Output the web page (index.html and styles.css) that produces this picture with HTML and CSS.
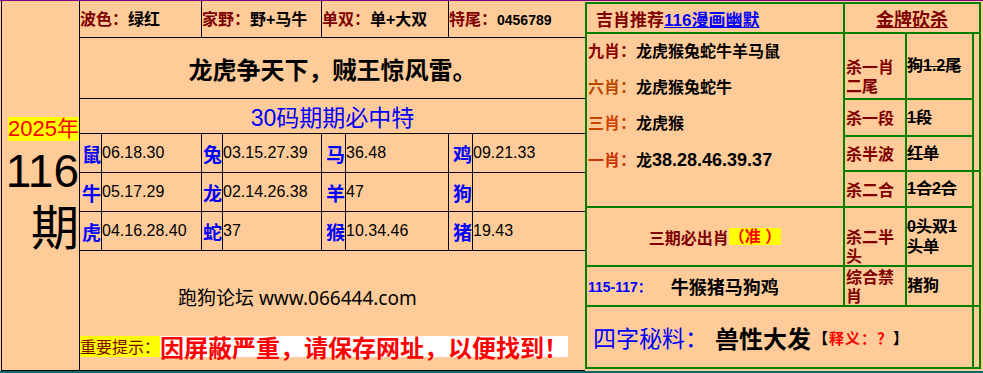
FILE: index.html
```html
<!DOCTYPE html>
<html lang="zh-CN">
<head>
<meta charset="utf-8">
<title>2025年116期</title>
<link rel="stylesheet" href="styles.css">
</head>
<body>
<div class="page">
  <div class="board">
    <div class="left">
      <div class="issue">
        <span class="year">2025年</span>
        <span class="num">116</span>
        <span class="qi">期</span>
      </div>
      <div class="info span2"><span class="k">波色：</span>绿红</div>
      <div class="info span2"><span class="k">家野：</span>野+马牛</div>
      <div class="info span2"><span class="k">单双：</span>单+大双</div>
      <div class="info span2"><span class="k">特尾：</span><span class="digits">0456789</span></div>
      <div class="poem">龙虎争天下，贼王惊风雷。</div>
      <div class="t30">30码期期必中特</div>

      <div class="z">鼠</div><div class="n">06.18.30</div>
      <div class="z">兔</div><div class="n">03.15.27.39</div>
      <div class="z">马</div><div class="n">36.48</div>
      <div class="z">鸡</div><div class="n">09.21.33</div>

      <div class="z">牛</div><div class="n">05.17.29</div>
      <div class="z">龙</div><div class="n">02.14.26.38</div>
      <div class="z">羊</div><div class="n">47</div>
      <div class="z">狗</div><div class="n"></div>

      <div class="z">虎</div><div class="n">04.16.28.40</div>
      <div class="z">蛇</div><div class="n">37</div>
      <div class="z">猴</div><div class="n">10.34.46</div>
      <div class="z">猪</div><div class="n">19.43</div>

      <div class="foot">
        <div class="forum">跑狗论坛 www.066444.com</div>
        <div class="notice"><span class="tip">重要提示：</span><span class="warn">因屏蔽严重，请保存网址，以便找到！</span></div>
      </div>
    </div>

    <div class="right">
      <div class="rh1"><span class="k">吉肖推荐</span><span class="link">116漫画幽默</span></div>
      <div class="rh2">金牌砍杀</div>
      <div class="rmain">
        <div class="line"><span class="c9">九肖：</span>龙虎猴兔蛇牛羊马鼠</div>
        <div class="line"><span class="c6">六肖：</span>龙虎猴兔蛇牛</div>
        <div class="line"><span class="c3">三肖：</span>龙虎猴</div>
        <div class="line"><span class="c1">一肖：</span>龙<span class="big">38.28.46.39.37</span></div>
      </div>

      <div class="lab shift r2">杀一肖二尾</div><div class="val r2">狗1.2尾</div>
      <div class="lab r3">杀一段</div><div class="val r3">1段</div>
      <div class="lab r4">杀半波</div><div class="val r4">红单</div>
      <div class="lab r5">杀二合</div><div class="val r5">1合2合</div>
      <div class="lab shift r6">杀二半头</div><div class="val r6">0头双1头单</div>
      <div class="lab r7">综合禁肖</div><div class="val plain r7">猪狗</div>

      <div class="nar nar1"></div>
      <div class="nar nar2"></div>
      <div class="nar nar3"></div>

      <div class="sanqi"><span class="k">三期必出肖</span><span class="zhun">（准 ）</span></div>
      <div class="range"><span class="rk">115-117：</span><span class="rv">牛猴猪马狗鸡</span></div>
      <div class="sizi"><span class="sk">四字秘料：</span><span class="sv">兽性大发</span><span class="note">【<span class="nr">释义：？</span>】</span></div>
    </div>
  </div>
  <div class="bar"></div>
</div>
</body>
</html>
```

FILE: styles.css
```css
html, body {
  margin: 0;
  padding: 0;
}
body {
  background: #ffcc99;
  font-family: "Liberation Sans", "Noto Sans CJK SC", sans-serif;
  color: #000;
}
.page {
  border-top: 1px solid #800080;
}
.board {
  display: flex;
  align-items: flex-start;
}

/* ---------- left table ---------- */
.left {
  margin-left: 1px;
  display: grid;
  grid-template-columns: 77px 21px 99px 20px 98px 23px 102px 23px 112px;
  grid-template-rows: 36px 60px 34px 38px 38px 38px 119px;
  gap: 1px;
  background: #000;
  border-left: 1px solid #000;
  border-bottom: 1px solid #000;
}
.left > * {
  background: #ffcc99;
  min-width: 0;
}
.issue {
  grid-column: 1;
  grid-row: 1 / 8;
  display: flex;
  flex-direction: column;
  align-items: flex-end;
  padding-top: 116px;
}
.year {
  background: #ffff00;
  color: #ff0000;
  font-size: 22px;
  line-height: 24px;
}
.num {
  font-size: 46px;
  line-height: 50px;
  margin-top: 5px;
}
.qi {
  font-family: "Noto Sans CJK SC", sans-serif;
  font-size: 48px;
  line-height: 52px;
  margin-top: 2px;
}
.span2 {
  grid-column: span 2;
}
.info {
  font-weight: bold;
  font-size: 16px;
  line-height: 34px;
  padding-top: 2px;
  white-space: nowrap;
}
.k {
  color: #800000;
}
.digits {
  font-size: 14px;
}
.poem {
  grid-column: 2 / -1;
  display: flex;
  align-items: center;
  justify-content: center;
  font-family: "Noto Sans CJK SC", sans-serif;
  font-weight: bold;
  font-size: 24px;
}
.t30 {
  grid-column: 2 / -1;
  display: flex;
  align-items: center;
  justify-content: center;
  color: #0000ff;
  font-size: 23px;
}
.z {
  display: flex;
  align-items: center;
  justify-content: flex-end;
  color: #0000ff;
  font-family: "Noto Sans CJK SC", sans-serif;
  font-weight: bold;
  font-size: 19px;
}
.n {
  display: flex;
  align-items: center;
  font-size: 16px;
}
.foot {
  grid-column: 2 / -1;
  display: flex;
  flex-direction: column;
  padding-top: 35px;
}
.forum {
  margin-left: 98px;
  font-family: "Noto Sans", "Noto Sans CJK SC", sans-serif;
  font-size: 19px;
  line-height: 24px;
  white-space: nowrap;
}
.notice {
  margin-top: 26px;
  display: flex;
  align-items: flex-start;
  height: 21px;
  white-space: nowrap;
}
.tip {
  background: #ffff00;
  color: #800000;
  font-family: "Noto Sans CJK SC", sans-serif;
  font-size: 16px;
  line-height: 21px;
  height: 21px;
}
.warn {
  background: #ffffff;
  color: #ff0000;
  font-family: "Noto Sans CJK SC", sans-serif;
  font-weight: bold;
  font-size: 24px;
  line-height: 21px;
  height: 21px;
}

/* ---------- right table ---------- */
.right {
  margin-top: 1px;
  display: grid;
  grid-template-columns: 256px 60px 65px 5px;
  grid-template-rows: 28px 64px 35px 33px 34px 57px 38px 60px;
  gap: 2px;
  background: #008000;
  border: 2px solid #008000;
}
.right > * {
  background: #ffcc99;
  min-width: 0;
}
.rh1 {
  grid-area: 1 / 1 / 2 / 2;
  display: flex;
  align-items: center;
  padding-left: 9px;
  font-weight: bold;
  font-size: 17px;
  white-space: nowrap;
}
.link {
  color: #0000ff;
  text-decoration: underline;
}
.rh2 {
  grid-area: 1 / 2 / 2 / 5;
  display: flex;
  align-items: center;
  justify-content: center;
  color: #800000;
  font-family: "Noto Sans CJK SC", sans-serif;
  font-weight: bold;
  font-size: 18px;
  text-decoration: underline;
}
.rmain {
  grid-area: 2 / 1 / 6 / 2;
  padding-left: 1px;
}
.line {
  font-weight: bold;
  font-size: 16px;
  line-height: 36px;
  white-space: nowrap;
}
.c9 { color: #8b0000; }
.c6 { color: #b84a00; }
.c3 { color: #cc4400; }
.c1 { color: #cc3300; }
.big {
  font-size: 18px;
}
.lab {
  grid-column: 2;
  display: flex;
  align-items: center;
  padding-left: 1px;
  color: #800000;
  font-family: "Noto Sans CJK SC", sans-serif;
  font-weight: bold;
  font-size: 16px;
  line-height: 19px;
}
.lab.shift {
  padding-top: 19px;
}
.val {
  grid-column: 3;
  display: flex;
  align-items: center;
  font-weight: bold;
  font-size: 16px;
  line-height: 20px;
  text-decoration: line-through;
}
.val.plain {
  text-decoration: none;
}
.r2 { grid-row: 2; }
.r3 { grid-row: 3; }
.r4 { grid-row: 4; }
.r5 { grid-row: 5; }
.r6 { grid-row: 6; }
.r7 { grid-row: 7; }
.nar1 { grid-area: 2 / 4 / 5 / 5; }
.nar2 { grid-area: 5 / 4 / 8 / 5; }
.nar3 { grid-area: 8 / 4 / 9 / 5; }
.sanqi {
  grid-area: 6 / 1 / 7 / 2;
  display: flex;
  align-items: center;
  justify-content: center;
  font-weight: bold;
  font-size: 16px;
  white-space: nowrap;
}
.zhun {
  background: #ffff00;
  color: #ff0000;
  line-height: 17px;
  height: 17px;
}
.range {
  grid-area: 7 / 1 / 8 / 2;
  display: flex;
  align-items: center;
  padding-left: 1px;
  font-weight: bold;
  white-space: nowrap;
}
.rk {
  color: #0000ff;
  font-size: 14px;
}
.rv {
  margin-left: 19px;
  font-size: 18px;
}
.sizi {
  grid-area: 8 / 1 / 9 / 4;
  display: flex;
  align-items: center;
  padding-left: 6px;
  white-space: nowrap;
}
.sk {
  color: #0000ff;
  font-family: "Noto Sans CJK SC", sans-serif;
  font-size: 23px;
}
.sv {
  margin-left: 7px;
  font-family: "Noto Sans CJK SC", sans-serif;
  font-weight: bold;
  font-size: 24px;
}
.note {
  margin-left: 2px;
  font-family: "Noto Sans CJK SC", sans-serif;
  font-weight: bold;
  font-size: 15px;
  letter-spacing: 1px;
}
.nr {
  color: #ff0000;
}

/* ---------- bottom strip ---------- */
.bar {
  height: 6px;
  background: #0b6a6a;
}
```
